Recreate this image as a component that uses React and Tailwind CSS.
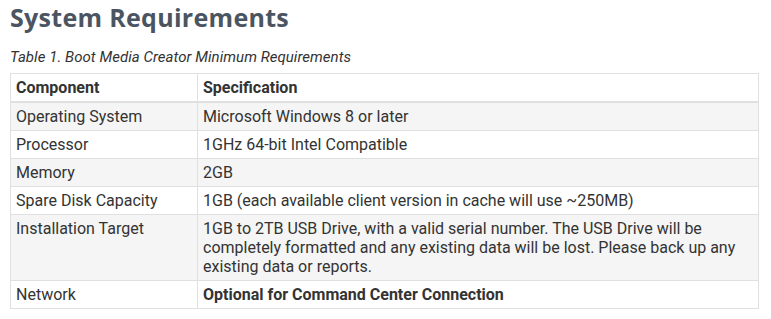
import React from 'react';

const rows = [
  { name: 'Operating System', spec: 'Microsoft Windows 8 or later' },
  { name: 'Processor', spec: '1GHz 64-bit Intel Compatible' },
  { name: 'Memory', spec: '2GB' },
  { name: 'Spare Disk Capacity', spec: '1GB (each available client version in cache will use ~250MB)' },
  {
    name: 'Installation Target',
    spec: '1GB to 2TB USB Drive, with a valid serial number. The USB Drive will be completely formatted and any existing data will be lost. Please back up any existing data or reports.',
  },
  { name: 'Network', spec: 'Optional for Command Center Connection', bold: true },
];

const App = () => {
  return (
    <div className="bg-white w-[771px] h-[319px] overflow-hidden px-[10px] pt-[1px] font-['Roboto',sans-serif] text-[#333]">
      <h1 className="font-['Open_Sans',sans-serif] font-bold text-[25px] leading-[32px] text-[#4a5561] tracking-[0.3px]">
        System Requirements
      </h1>
      <p className="italic text-[15px] leading-[18px] mt-[15px] mb-[7px] text-[#333] tracking-[0.05px]">
        Table 1. Boot Media Creator Minimum Requirements
      </p>
      <table className="w-[749px] border-collapse text-[16px] leading-[19px] border border-[#e0e0e0]">
        <thead>
          <tr className="bg-white border-t border-dashed border-[#ddd]">
            <th className="w-[187px] text-left font-bold px-[5px] py-[4px] border-r border-b-2 border-[#e0e0e0]">Component</th>
            <th className="text-left font-bold px-[5px] py-[4px] border-b-2 border-[#e0e0e0]">Specification</th>
          </tr>
        </thead>
        <tbody>
          {rows.map((r, i) => (
            <tr key={r.name} className={i % 2 === 0 ? 'bg-[#f5f5f5]' : 'bg-white'}>
              <td className="align-top px-[5px] py-[4px] border-r border-b border-[#e0e0e0]">{r.name}</td>
              <td className={`align-top px-[5px] py-[4px] pr-[18px] border-b border-[#e0e0e0] ${r.bold ? 'font-bold' : ''}`}>
                {r.spec}
              </td>
            </tr>
          ))}
        </tbody>
      </table>
    </div>
  );
};

export default App;
